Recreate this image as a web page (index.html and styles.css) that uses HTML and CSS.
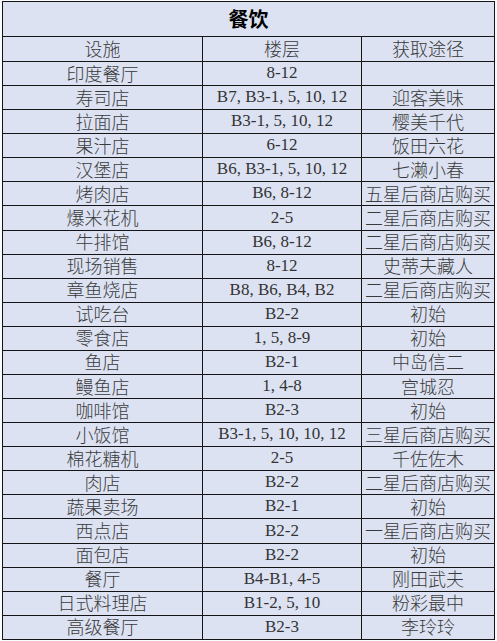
FILE: index.html
```html
<!DOCTYPE html>
<html lang="zh-CN">
<head>
<meta charset="utf-8">
<title>餐饮</title>
<link rel="stylesheet" href="styles.css">
</head>
<body>
<div class="sheet">
  <div class="title">餐饮</div>
  <div class="c h">设施</div><div class="c h">楼层</div><div class="c h">获取途径</div>
  <div class="c">印度餐厅</div><div class="c fl">8-12</div><div class="c"></div>
  <div class="c">寿司店</div><div class="c fl">B7, B3-1, 5, 10, 12</div><div class="c">迎客美味</div>
  <div class="c">拉面店</div><div class="c fl">B3-1, 5, 10, 12</div><div class="c">樱美千代</div>
  <div class="c">果汁店</div><div class="c fl">6-12</div><div class="c">饭田六花</div>
  <div class="c">汉堡店</div><div class="c fl">B6, B3-1, 5, 10, 12</div><div class="c">七濑小春</div>
  <div class="c">烤肉店</div><div class="c fl">B6, 8-12</div><div class="c">五星后商店购买</div>
  <div class="c">爆米花机</div><div class="c fl">2-5</div><div class="c">二星后商店购买</div>
  <div class="c">牛排馆</div><div class="c fl">B6, 8-12</div><div class="c">二星后商店购买</div>
  <div class="c">现场销售</div><div class="c fl">8-12</div><div class="c">史蒂夫藏人</div>
  <div class="c">章鱼烧店</div><div class="c fl">B8, B6, B4, B2</div><div class="c">二星后商店购买</div>
  <div class="c">试吃台</div><div class="c fl">B2-2</div><div class="c">初始</div>
  <div class="c">零食店</div><div class="c fl">1, 5, 8-9</div><div class="c">初始</div>
  <div class="c">鱼店</div><div class="c fl">B2-1</div><div class="c">中岛信二</div>
  <div class="c">鳗鱼店</div><div class="c fl">1, 4-8</div><div class="c">宫城忍</div>
  <div class="c">咖啡馆</div><div class="c fl">B2-3</div><div class="c">初始</div>
  <div class="c">小饭馆</div><div class="c fl">B3-1, 5, 10, 10, 12</div><div class="c">三星后商店购买</div>
  <div class="c">棉花糖机</div><div class="c fl">2-5</div><div class="c">千佐佐木</div>
  <div class="c">肉店</div><div class="c fl">B2-2</div><div class="c">二星后商店购买</div>
  <div class="c">蔬果卖场</div><div class="c fl">B2-1</div><div class="c">初始</div>
  <div class="c">西点店</div><div class="c fl">B2-2</div><div class="c">一星后商店购买</div>
  <div class="c">面包店</div><div class="c fl">B2-2</div><div class="c">初始</div>
  <div class="c">餐厅</div><div class="c fl">B4-B1, 4-5</div><div class="c">刚田武夫</div>
  <div class="c">日式料理店</div><div class="c fl">B1-2, 5, 10</div><div class="c">粉彩最中</div>
  <div class="c">高级餐厅</div><div class="c fl">B2-3</div><div class="c">李玲玲</div>
</div>
</body>
</html>
```
FILE: styles.css
```css
html, body {
  margin: 0;
  padding: 0;
  background: #fbfcfe;
}
.sheet {
  box-sizing: border-box;
  margin: 1px 0 0 2px;
  width: 493px;
  display: grid;
  grid-template-columns: 200px 159px 133px;
  grid-template-rows: 35px 25px repeat(24, 24.083px);
  border-left: 1px solid #151515;
  border-top: 1px solid #151515;
  background: #dce2f2;
  font-family: "Noto Sans CJK SC", sans-serif;
  color: #3a3a3a;
}
.title {
  grid-column: 1 / 4;
  box-sizing: border-box;
  border-right: 1px solid #151515;
  border-bottom: 1px solid #151515;
  display: flex;
  align-items: center;
  justify-content: center;
  font-size: 20px;
  font-weight: 700;
  color: #000;
  padding-bottom: 2px;
}
.c {
  box-sizing: border-box;
  border-right: 1px solid #151515;
  border-bottom: 1px solid #151515;
  display: flex;
  align-items: center;
  justify-content: center;
  font-size: 18px;
  font-weight: 300;
  line-height: 18px;
  white-space: nowrap;
  padding-bottom: 2px;
}
.fl {
  font-family: "Liberation Serif", "Noto Sans CJK SC", serif;
  font-size: 17px;
  font-weight: 400;
  color: #333;
  padding-bottom: 1px;
}
```
